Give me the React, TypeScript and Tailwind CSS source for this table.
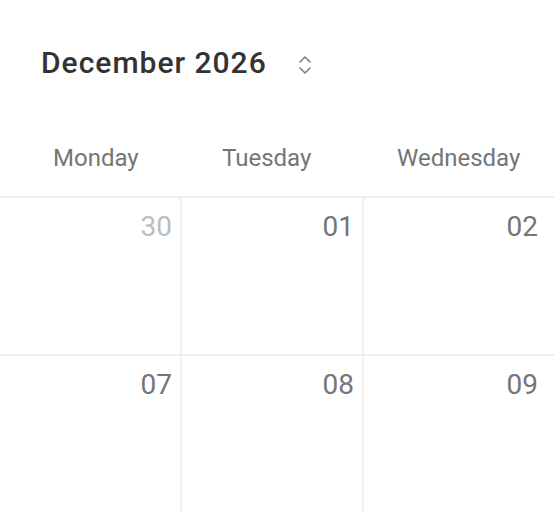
import React from 'react';
import { ChevronsUpDown } from 'lucide-react';

const days = [
  { name: 'Monday', pad: 'pl-[53px]' },
  { name: 'Tuesday', pad: 'pl-[40px]' },
  { name: 'Wednesday', pad: 'pl-[33px]' },
];

const weeks = [
  [
    { n: '30', muted: true },
    { n: '01', muted: false },
    { n: '02', muted: false },
  ],
  [
    { n: '07', muted: false },
    { n: '08', muted: false },
    { n: '09', muted: false },
  ],
];

const App: React.FC = () => {
  return (
    <div
      className="w-[554px] h-[512px] overflow-hidden bg-white"
      style={{ fontFamily: 'Roboto, "Liberation Sans", sans-serif' }}
    >
      {/* month header */}
      <div className="flex items-center h-[126px] pl-[41px]">
        <h1 className="text-[30px] font-medium text-[#333333] leading-none tracking-[1px]">
          December 2026
        </h1>
        <button className="ml-[26px] mt-[4px] text-[#7a7a7a]">
          <ChevronsUpDown size={24} strokeWidth={1.5} />
        </button>
      </div>

      {/* weekday names */}
      <div className="flex h-[72px] items-center border-b-2 border-[#efefeb] pb-[6px]">
        {days.map((d) => (
          <div key={d.name} className={`w-[182px] shrink-0 ${d.pad}`}>
            <span className="text-[24px] text-[#757575]">{d.name}</span>
          </div>
        ))}
      </div>

      {/* grid */}
      {weeks.map((week, wi) => (
        <div key={wi} className="flex h-[158px] border-b-2 border-[#efefeb]">
          {week.map((c, ci) => (
            <div
              key={c.n}
              className={
                'w-[182px] shrink-0 flex justify-end pr-[8px] pt-[13px] ' +
                (ci < 2 ? 'border-r-2 border-[#efefeb]' : '')
              }
            >
              <span className={'text-[28px] leading-[32px] ' + (c.muted ? 'text-[#bdbdbd]' : 'text-[#757575]')}>
                {c.n}
              </span>
            </div>
          ))}
        </div>
      ))}
    </div>
  );
};

export default App;
